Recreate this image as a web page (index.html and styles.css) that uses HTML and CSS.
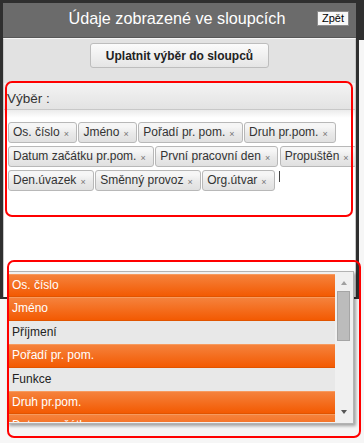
FILE: index.html
```html
<!DOCTYPE html>
<html lang="cs">
  <head>
    <meta charset="UTF-8" />
    <meta name="viewport" content="width=device-width, initial-scale=1.0" />
    <title>Údaje zobrazené ve sloupcích</title>
    <link rel="stylesheet" href="styles.css">
  </head>
  <body>
    <div class="dialog">
      <!-- hlavička dialogu -->
      <div class="dialog-head">
        <span class="title">Údaje zobrazené ve sloupcích</span>
        <button class="back">Zpět</button>
      </div>

      <div class="dialog-body">
        <div class="apply-row">
          <button class="apply">Uplatnit výběr do sloupců</button>
        </div>

        <!-- vybrané sloupce -->
        <div class="picker">
          <div class="picker-head">Výběr :</div>
          <div class="picker-box">
            <ul class="tags">
              <li class="tag">Os. číslo<span class="x">×</span></li>
              <li class="tag">Jméno<span class="x">×</span></li>
              <li class="tag">Pořadí pr. pom.<span class="x">×</span></li>
              <li class="tag">Druh pr.pom.<span class="x">×</span></li>
              <li class="tag">Datum začátku pr.pom.<span class="x">×</span></li>
              <li class="tag">První pracovní den<span class="x">×</span></li>
              <li class="tag">Propuštěn<span class="x">×</span></li>
              <li class="tag">Den.úvazek<span class="x">×</span></li>
              <li class="tag">Směnný provoz<span class="x">×</span></li>
              <li class="tag">Org.útvar<span class="x">×</span></li>
              <li class="caret"></li>
            </ul>
          </div>
        </div>
      </div>
    </div>

    <!-- rozbalený seznam -->
    <div class="dropdown">
      <ul class="options">
        <li class="opt on">Os. číslo</li>
        <li class="opt on">Jméno</li>
        <li class="opt">Příjmení</li>
        <li class="opt on">Pořadí pr. pom.</li>
        <li class="opt">Funkce</li>
        <li class="opt on">Druh pr.pom.</li>
        <li class="opt on">Datum začátku pr.pom.</li>
      </ul>
      <div class="scrollbar">
        <span class="arrow-up"></span>
        <span class="thumb"></span>
        <span class="arrow-down"></span>
      </div>
    </div>

    <!-- červené označení -->
    <div class="mark mark-top"></div>
    <div class="mark mark-bottom"></div>
  </body>
</html>
```

FILE: styles.css
```css
body {
  margin: 0;
  height: 443px;
  overflow: hidden;
  font-family: "Liberation Sans", Arial, sans-serif;
  background: linear-gradient(#2f2f2f 0 40px, #f6f6f6 40px);
}
.dialog {
  width: 359px;
  height: 299px;
  box-sizing: border-box;
  border: 3px solid #2f2f2f;
  border-bottom-width: 2px;
  display: flex;
  flex-direction: column;
  background: #fff;
}
.dialog-head {
  display: grid;
  align-items: center;
  height: 34px;
  background: #6b6b6b;
  border-bottom: 1px solid #575757;
}
.dialog-head > * {
  grid-area: 1 / 1;
}
.title {
  text-align: center;
  color: #fff;
  font-size: 16.2px;
  padding: 0 5px 3px 0;
}
.back {
  justify-self: end;
  margin: 0 7px 4px 0;
  height: 15px;
  padding: 0 4px;
  box-sizing: border-box;
  border: 1px solid #8a8a8a;
  background: #f8f8f8;
  font-family: "Liberation Sans", Arial, sans-serif;
  font-size: 11px;
  line-height: 12px;
  color: #000;
}
.dialog-body {
  flex: 1;
  display: flex;
  flex-direction: column;
  background: #e2e2e2;
  border-top: 1px solid #f6f6f6;
  border-left: 1px solid #c8c8c8;
  border-right: 1px solid #c8c8c8;
}
.apply-row {
  display: flex;
  justify-content: center;
  padding-top: 4px;
}
.apply {
  width: 179px;
  height: 25px;
  border: 1px solid #bdbdbd;
  border-radius: 3px;
  background: linear-gradient(#fbfbfb, #e5e5e5);
  font-family: "Liberation Sans", Arial, sans-serif;
  font-size: 12px;
  font-weight: bold;
  color: #222;
}
.picker {
  flex: 1;
  display: flex;
  flex-direction: column;
  margin-top: 15px;
  min-height: 0;
}
.picker-head {
  height: 20px;
  padding: 6px 0 0 3px;
  line-height: 20px;
  font-size: 13.5px;
  color: #333;
  background: linear-gradient(#f3f3f3, #e3e3e3);
  border-bottom: 1px solid #c8c8c8;
}
.picker-box {
  flex: 1;
  overflow: hidden;
  padding: 11.5px 0 0 4px;
  background: linear-gradient(#ebebeb, #fff 8px);
}
.tags {
  list-style: none;
  margin: 0;
  padding: 0;
  width: 356px;
  display: flex;
  flex-wrap: wrap;
  gap: 3px 1.5px;
}
.tag {
  display: flex;
  align-items: center;
  height: 21px;
  box-sizing: border-box;
  padding: 0 7px 0 4px;
  border: 1px solid #b8b8b8;
  border-radius: 3px;
  background: linear-gradient(#f6f6f6 20%, #e9e9e9 55%, #e0e0e0);
  font-size: 12px;
  color: #333;
  white-space: nowrap;
}
.x {
  margin: 3px 0 0 4px;
  font-size: 9px;
  color: #777;
}
.caret {
  width: 1px;
  height: 11px;
  margin: 1px 0 0 3px;
  background: #444;
}
.dropdown {
  position: absolute;
  left: 7px;
  top: 271px;
  width: 347px;
  height: 153px;
  box-sizing: border-box;
  display: flex;
  border: 1px solid #b3b3b3;
  background: #f0f0f0;
  box-shadow: 2px 2px 3px rgba(0, 0, 0, 0.35);
}
.options {
  list-style: none;
  margin: 2px 0;
  padding: 0;
  width: 327px;
  height: 147.5px;
  overflow: hidden;
}
.opt {
  height: 23.4px;
  box-sizing: border-box;
  padding-left: 4px;
  line-height: 23px;
  font-size: 12px;
  color: #222;
  background: #e8e8e8;
}
.opt.on {
  color: #fff;
  line-height: 21px;
  background: linear-gradient(#f5823c, #f35a02);
  border-top: 1px solid #f79a5e;
  border-bottom: 1px solid #e05400;
}
.scrollbar {
  flex: 1;
  display: flex;
  flex-direction: column;
}
.arrow-up,
.arrow-down {
  width: 0;
  height: 0;
  border-left: 3.5px solid transparent;
  border-right: 3.5px solid transparent;
  align-self: center;
}
.arrow-up {
  margin-top: 9px;
  border-bottom: 4px solid #a0a0a0;
}
.arrow-down {
  margin: auto 0 9px;
  border-top: 4px solid #555;
}
.thumb {
  width: 13px;
  height: 50px;
  box-sizing: border-box;
  margin: 6px 0 0 2px;
  background: #bcbcbc;
  border: 1px solid #a5a5a5;
}
.mark {
  position: absolute;
  box-sizing: border-box;
  border: 2px solid #f00;
  border-radius: 7px;
}
.mark-top {
  left: 5px;
  top: 81px;
  width: 348px;
  height: 136px;
}
.mark-bottom {
  left: 7px;
  top: 260px;
  width: 354px;
  height: 178px;
}
```
